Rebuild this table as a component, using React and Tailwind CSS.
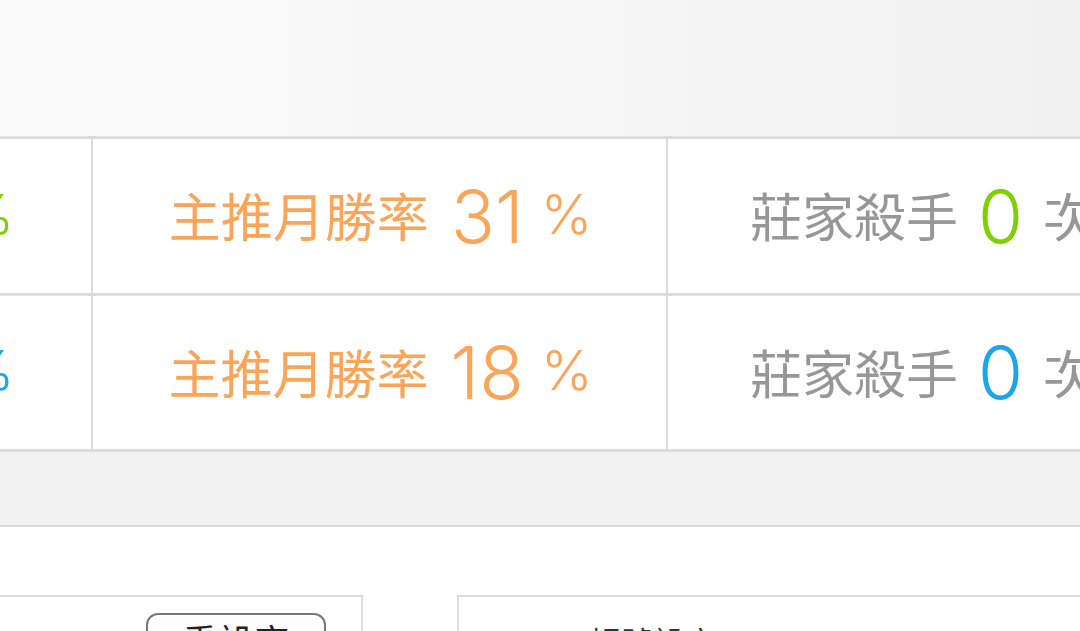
import React from "react";

const rows = [
  { leftVal: "62", color: "text-[#7fd000]", month: "31", kill: "0" },
  { leftVal: "45", color: "text-[#1aa6ea]", month: "18", kill: "0" },
];

function StatCell({ label, value, unit, labelColor, valueColor, className }) {
  return (
    <div className={"flex h-full items-center " + className}>
      <span className={"mt-[-2px] text-[52px] leading-none " + labelColor}>{label}</span>
      <span className={"ml-[22px] font-['Inter',sans-serif] text-[73px] font-light leading-none " + valueColor}>
        {value}
      </span>
      <span className={"ml-[17px] mb-[4px] font-['Inter',sans-serif] text-[55px] font-light leading-none " + labelColor}>
        {unit}
      </span>
    </div>
  );
}

export default function App() {
  return (
    <div className="h-[631px] w-[1080px] overflow-hidden bg-white font-['Noto_Sans_CJK_TC','Noto_Sans',sans-serif]">
      <div className="h-[136px] bg-gradient-to-r from-[#fbfbfb] to-[#f1f1f1]" />

      <div className="-ml-[486px] w-[1800px] border-t-[3px] border-[#dcdcdc]">
        {rows.map((r, i) => (
          <div
            key={i}
            className={
              "flex border-b-[3px] border-[#dcdcdc] " + (i === 0 ? "h-[157px]" : "h-[156px]")
            }
          >
            <div className="w-[579px] border-r-2 border-[#dcdcdc] pr-[16px]">
              <StatCell
                label="主推總勝率"
                value={r.leftVal}
                unit="%"
                labelColor={r.color}
                valueColor={r.color}
                className="justify-center"
              />
            </div>
            <div className="w-[575px] border-r-2 border-[#dcdcdc] pl-[2px]">
              <StatCell
                label="主推月勝率"
                value={r.month}
                unit="%"
                labelColor="text-[#fca457]"
                valueColor="text-[#fca457]"
                className="justify-center"
              />
            </div>
            <div className="flex-1 pl-[82px]">
              <div className="flex h-full items-center">
                <span className="mt-[-2px] text-[52px] leading-none text-[#979797]">莊家殺手</span>
                <span className={"ml-[20px] font-['Inter',sans-serif] text-[73px] font-light leading-none " + r.color}>
                  {r.kill}
                </span>
                <span className="ml-[20px] mt-[-2px] text-[52px] leading-none text-[#979797]">次</span>
              </div>
            </div>
          </div>
        ))}
      </div>

      <div className="h-[75px] border-b-2 border-[#dadada] bg-[#f2f2f2]" />

      <div className="flex pt-[68px]">
        <div className="h-[80px] w-[363px] border-t-2 border-r-2 border-[#dcdcdc] pl-[146px] pt-[16px]">
          <div className="flex h-[60px] w-[180px] justify-center rounded-[12px] border-2 border-[#777777] bg-gradient-to-b from-white to-[#eeeeee] pt-[7px] text-[36px] leading-none text-[#222]">
            重設定
          </div>
        </div>
        <div className="ml-[94px] h-[80px] flex-1 border-t-2 border-l-2 border-[#dcdcdc] pl-[130px] pt-[28px]">
          <span className="text-[32px] leading-none text-[#333]">帳號設定</span>
        </div>
      </div>
    </div>
  );
}
